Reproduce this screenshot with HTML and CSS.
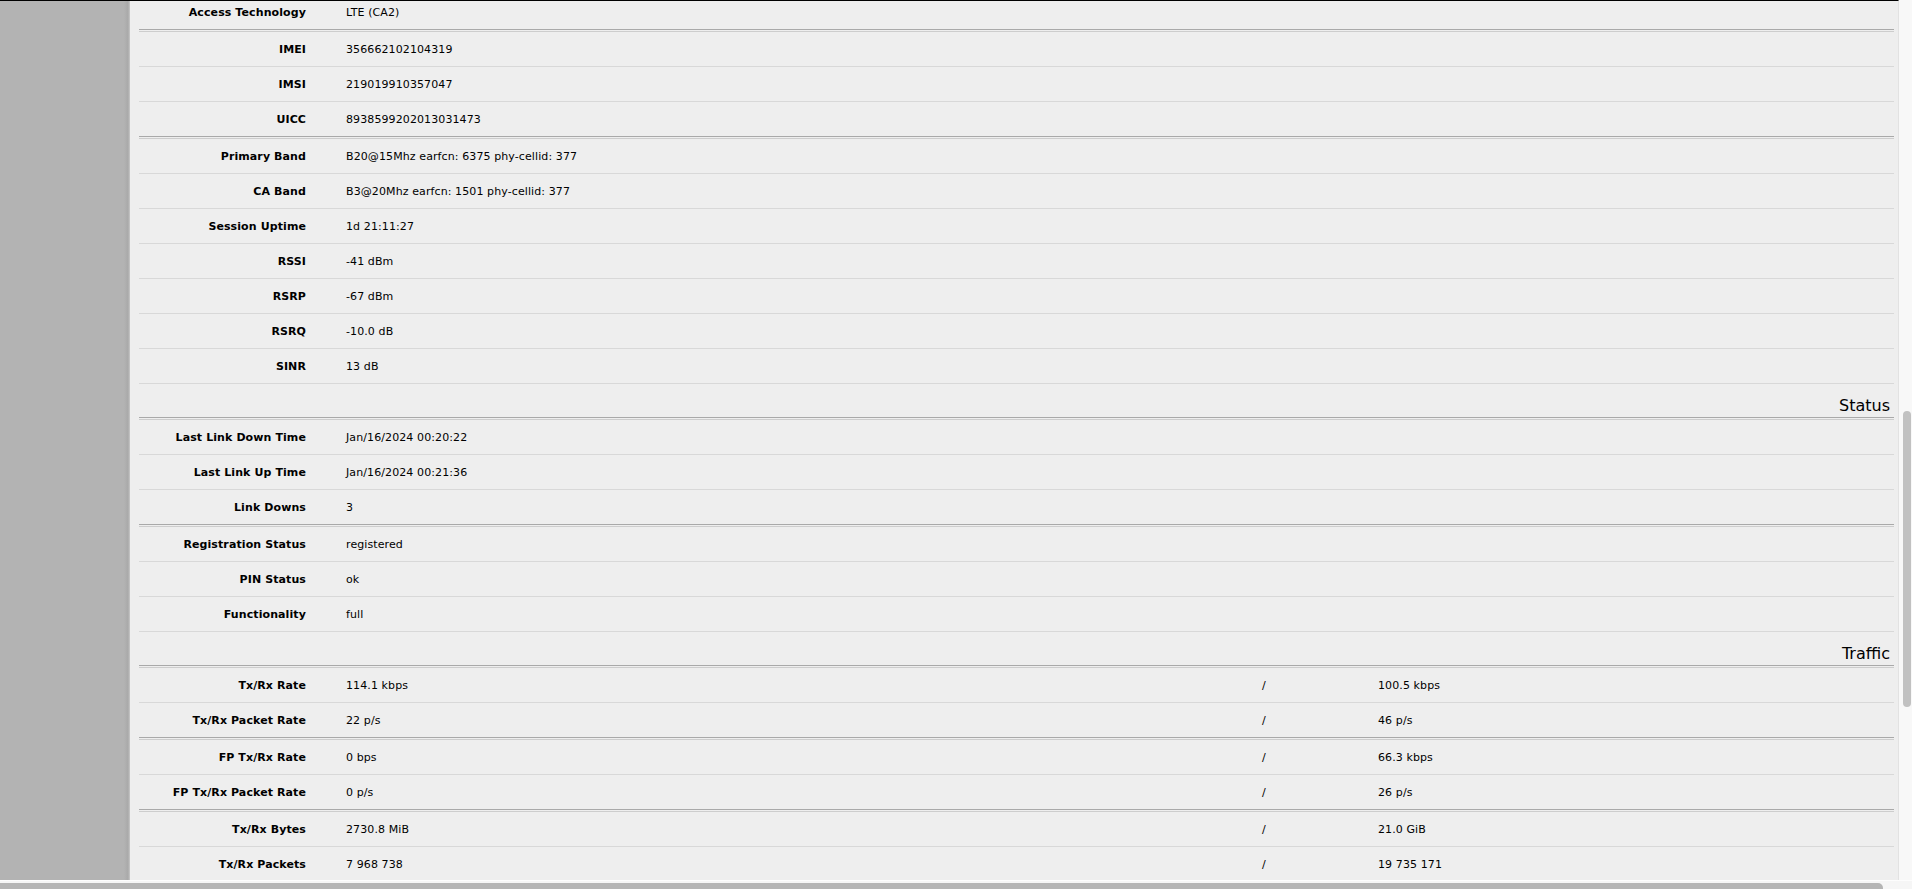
FILE: index.html
```html
<!DOCTYPE html>
<html lang="en">
<head>
  <meta charset="UTF-8">
  <meta name="viewport" content="width=device-width, initial-scale=1.0">
  <title>LTE Interface</title>
  <link rel="stylesheet" href="styles.css">
</head>
<body>
  <div class="main">
    <div class="sidebar"></div>

    <div class="panel">
      <div class="content">

        <div class="section">
          <div class="group">
            <div class="row"><div class="label">Access Technology</div><div class="value">LTE (CA2)</div></div>
          </div>
          <div class="group">
            <div class="row"><div class="label">IMEI</div><div class="value">356662102104319</div></div>
            <div class="row"><div class="label">IMSI</div><div class="value">219019910357047</div></div>
            <div class="row"><div class="label">UICC</div><div class="value">8938599202013031473</div></div>
          </div>
          <div class="group">
            <div class="row"><div class="label">Primary Band</div><div class="value">B20@15Mhz earfcn: 6375 phy-cellid: 377</div></div>
            <div class="row"><div class="label">CA Band</div><div class="value">B3@20Mhz earfcn: 1501 phy-cellid: 377</div></div>
            <div class="row"><div class="label">Session Uptime</div><div class="value">1d 21:11:27</div></div>
            <div class="row"><div class="label">RSSI</div><div class="value">-41 dBm</div></div>
            <div class="row"><div class="label">RSRP</div><div class="value">-67 dBm</div></div>
            <div class="row"><div class="label">RSRQ</div><div class="value">-10.0 dB</div></div>
            <div class="row"><div class="label">SINR</div><div class="value">13 dB</div></div>
          </div>
        </div>

        <div class="section">
          <div class="heading">Status</div>
          <div class="group">
            <div class="row"><div class="label">Last Link Down Time</div><div class="value">Jan/16/2024 00:20:22</div></div>
            <div class="row"><div class="label">Last Link Up Time</div><div class="value">Jan/16/2024 00:21:36</div></div>
            <div class="row"><div class="label">Link Downs</div><div class="value">3</div></div>
          </div>
          <div class="group">
            <div class="row"><div class="label">Registration Status</div><div class="value">registered</div></div>
            <div class="row"><div class="label">PIN Status</div><div class="value">ok</div></div>
            <div class="row"><div class="label">Functionality</div><div class="value">full</div></div>
          </div>
        </div>

        <div class="section">
          <div class="heading">Traffic</div>
          <div class="group">
            <div class="row pair"><div class="label">Tx/Rx Rate</div><div class="value">114.1 kbps</div><div class="sep">/</div><div class="value">100.5 kbps</div></div>
            <div class="row pair"><div class="label">Tx/Rx Packet Rate</div><div class="value">22 p/s</div><div class="sep">/</div><div class="value">46 p/s</div></div>
          </div>
          <div class="group">
            <div class="row pair"><div class="label">FP Tx/Rx Rate</div><div class="value">0 bps</div><div class="sep">/</div><div class="value">66.3 kbps</div></div>
            <div class="row pair"><div class="label">FP Tx/Rx Packet Rate</div><div class="value">0 p/s</div><div class="sep">/</div><div class="value">26 p/s</div></div>
          </div>
          <div class="group">
            <div class="row pair"><div class="label">Tx/Rx Bytes</div><div class="value">2730.8 MiB</div><div class="sep">/</div><div class="value">21.0 GiB</div></div>
            <div class="row pair"><div class="label">Tx/Rx Packets</div><div class="value">7 968 738</div><div class="sep">/</div><div class="value">19 735 171</div></div>
          </div>
        </div>

      </div>
    </div>

    <div class="vscroll">
      <div class="vthumb"></div>
    </div>
  </div>

  <div class="hscroll">
    <div class="hthumb"></div>
  </div>
</body>
</html>
```

FILE: styles.css
```css
:root {
  --panel-bg: #eeeeee;
  --sidebar-bg: #b3b3b3;
  --row-line: #d8d8d8;
  --group-dark: #a9a9a9;
  --group-light: #cdcdcd;
  --text: #000000;
}

html, body {
  margin: 0;
  padding: 0;
  height: 100%;
}

body {
  width: 1912px;
  height: 889px;
  overflow: hidden;
  display: flex;
  flex-direction: column;
  font-family: "DejaVu Sans", Verdana, sans-serif;
  font-size: 11px;
  letter-spacing: 0.1px;
  color: var(--text);
  background: #f8f8f8;
}

.main {
  flex: 1;
  display: flex;
  min-height: 0;
}

/* Left menu column (scrolled out of view) */
.sidebar {
  width: 130px;
  flex-shrink: 0;
  border-top: 1px solid #000;
  background: linear-gradient(to right, var(--sidebar-bg) 0, var(--sidebar-bg) 124px, #a9a9a9 128px, #c9c9c9 130px);
}

.panel {
  flex: 1;
  overflow: hidden;
  border-top: 1px solid #000;
  background-color: var(--panel-bg);
  border-right: 1px solid #e2e2e2;
}

/* the page is scrolled a little, first row is cut */
.content {
  margin: -6px 4px 0 9px;
  display: flex;
  flex-direction: column;
}

.heading {
  font-size: 16px;
  line-height: 20px;
  letter-spacing: 0;
  padding: 12px 4px 1px 0;
  text-align: right;
  border-bottom: 1px solid var(--group-dark);
}

.group + .group,
.heading + .group {
  margin-top: 1px;
  border-top: 1px solid var(--group-light);
}

.row {
  display: grid;
  grid-template-columns: 167px 1fr;
  column-gap: 40px;
  align-items: center;
  height: 34px;
  border-bottom: 1px solid var(--row-line);
}

/* tx / rx rows */
.row.pair {
  grid-template-columns: 207px 916px 116px 1fr;
  column-gap: 0;
}

.row.pair .label {
  margin-right: 40px;
}

.group:not(:last-child) .row:last-child {
  border-bottom-color: var(--group-dark);
}

.label {
  font-weight: bold;
  text-align: right;
  white-space: nowrap;
}

.value {
  white-space: nowrap;
}

/* Scrollbars */
.vscroll {
  width: 13px;
  flex-shrink: 0;
  background: #f8f8f8;
  position: relative;
}

.vthumb {
  position: absolute;
  left: 4px;
  top: 411px;
  width: 8px;
  height: 296px;
  border-radius: 4px;
  background: #c1c1c1;
}

.hscroll {
  height: 9px;
  flex-shrink: 0;
  background: #f6f6f6;
  border-top: 1px solid #fdfdfd;
  box-sizing: border-box;
  position: relative;
}

.hthumb {
  position: absolute;
  left: 0;
  top: 2px;
  width: 1883px;
  height: 10px;
  border-radius: 0 5px 5px 0;
  background: #b5b5b5;
}
```
